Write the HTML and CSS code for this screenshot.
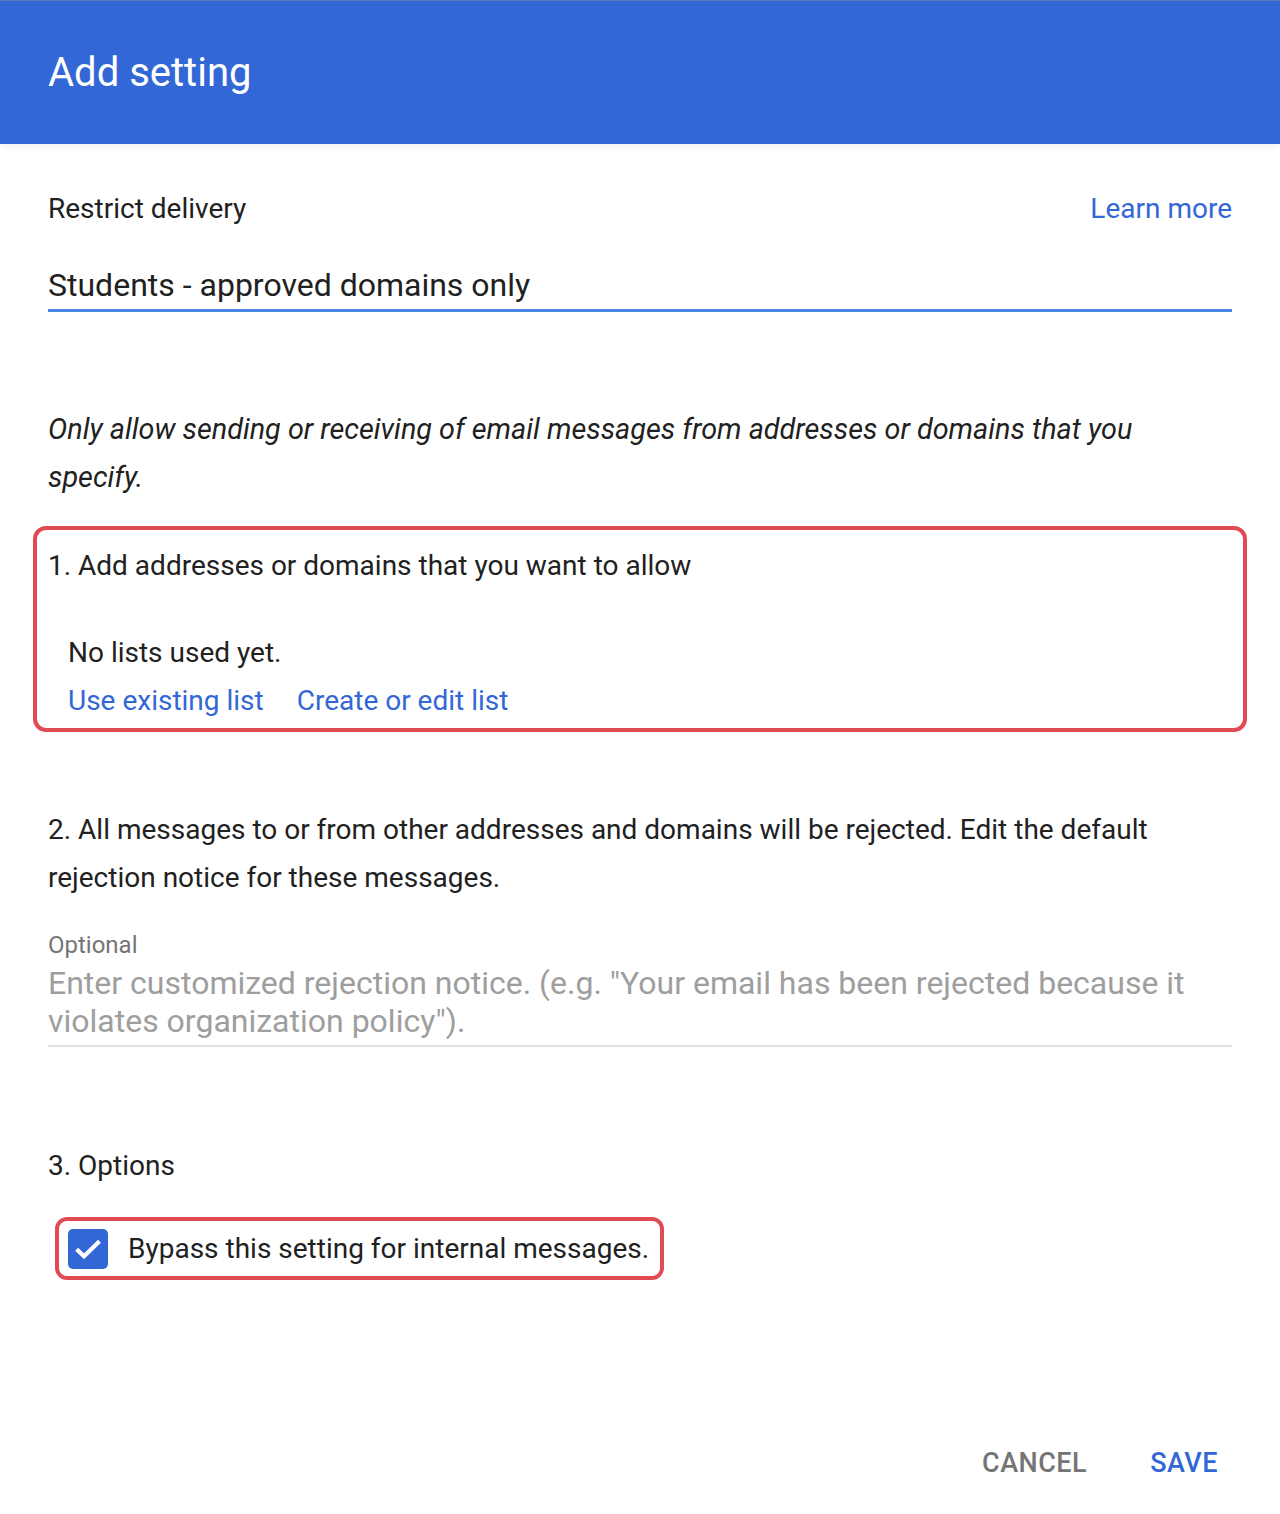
FILE: index.html
```html
<!DOCTYPE html>
<html>
<head>
<meta charset="utf-8">
<link rel="stylesheet" href="styles.css">
</head>
<body>
<div class="dialog">
  <header class="dlg-header"><h1 class="dlg-title">Add setting</h1></header>
  <main class="dlg-body">
    <div class="row-top">
      <span class="label">Restrict delivery</span>
      <a class="link">Learn more</a>
    </div>
    <div class="name-input">Students - approved domains only</div>
    <p class="desc">Only allow sending or receiving of email messages from addresses or domains that you specify.</p>
    <section class="hl-box step1">
      <div class="step-title">1. Add addresses or domains that you want to allow</div>
      <div class="no-lists">No lists used yet.</div>
      <div class="links"><a class="link">Use existing list</a><a class="link">Create or edit list</a></div>
    </section>
    <p class="step2">2. All messages to or from other addresses and domains will be rejected. Edit the default rejection notice for these messages.</p>
    <div class="opt-label">Optional</div>
    <div class="textarea">Enter customized rejection notice. (e.g. "Your email has been rejected because it violates organization policy").</div>
    <div class="step3">3. Options</div>
    <div class="hl-box opt-row">
      <span class="checkbox"><svg viewBox="0 0 24 24" width="40" height="40"><path d="M5.2 12.1l4.4 4.3 9.3-9.1" fill="none" stroke="#fff" stroke-width="2.5"/></svg></span>
      <span class="opt-text">Bypass this setting for internal messages.</span>
    </div>
  </main>
  <footer class="dlg-footer">
    <button class="btn btn-cancel">CANCEL</button>
    <button class="btn btn-save">SAVE</button>
  </footer>
</div>
</body>
</html>
```
FILE: styles.css
```css
* { box-sizing: border-box; }
html, body { margin: 0; padding: 0; background: #fff; }
body { font-family: Roboto, "Noto Sans", "Liberation Sans", sans-serif; color: #212121; }
.dialog { width: 1280px; min-height: 1514px; }
.dlg-header {
  height: 144px; background: #3367d6; padding-left: 48px;
  box-shadow: 0 3px 8px rgba(0,0,0,0.06);
  border-top: 1px solid #5777c0;
}
.dlg-title { margin: 0; font-weight: 400; font-size: 40px; line-height: 144px; color: #fff; }
.dlg-body { padding: 45px 48px 0; }
.row-top { display: flex; justify-content: space-between; align-items: center; height: 40px; }
.label { font-size: 28px; line-height: 40px; }
.link { color: #3367d6; font-size: 28px; line-height: 40px; cursor: pointer; }
.name-input {
  margin-top: 36px; font-size: 32px; line-height: 40px; padding-bottom: 4px;
  border-bottom: 3px solid #4a86e8;
}
.desc { margin: 93px 0 0; font-style: italic; font-size: 28.8px; line-height: 48px; }
.hl-box { border: 4px solid #e04b53; border-radius: 13px; }
.step1 { margin: 25px -15px 0; padding: 16px 11px 7px; }
.step-title { font-size: 28px; line-height: 40px; }
.no-lists { margin-top: 47px; padding-left: 20px; font-size: 28px; line-height: 40px; }
.links { margin-top: 8px; padding-left: 20px; display: flex; gap: 33px; }
.step2 { margin: 74px 0 0; font-size: 28px; line-height: 48px; }
.opt-label { margin-top: 28px; font-size: 24px; line-height: 30px; color: #757575; }
.textarea {
  margin-top: 4px; font-size: 32px; line-height: 38px; color: #9e9e9e;
  padding-bottom: 5px; border-bottom: 2px solid #e0e0e0;
}
.step3 { margin-top: 99px; font-size: 28px; line-height: 40px; }
.opt-row {
  margin: 31px 0 0 7px; display: inline-flex; align-items: center; gap: 20px;
  padding: 8px 11px 7px 9px; border-radius: 12px;
}
.checkbox {
  width: 40px; height: 40px; border-radius: 5px; background: #3367d6;
  display: inline-flex; align-items: center; justify-content: center;
}
.checkbox svg { display: block; }
.opt-text { font-size: 28px; line-height: 40px; }
.dlg-footer { display: flex; justify-content: flex-end; gap: 63px; padding: 163px 62px 0 0; }
.btn {
  border: none; background: none; padding: 0; font-family: inherit;
  font-size: 27px; line-height: 40px; font-weight: 500; letter-spacing: 0.5px; cursor: pointer;
}
.btn-cancel { color: #757575; }
.btn-save { color: #3367d6; }
```
